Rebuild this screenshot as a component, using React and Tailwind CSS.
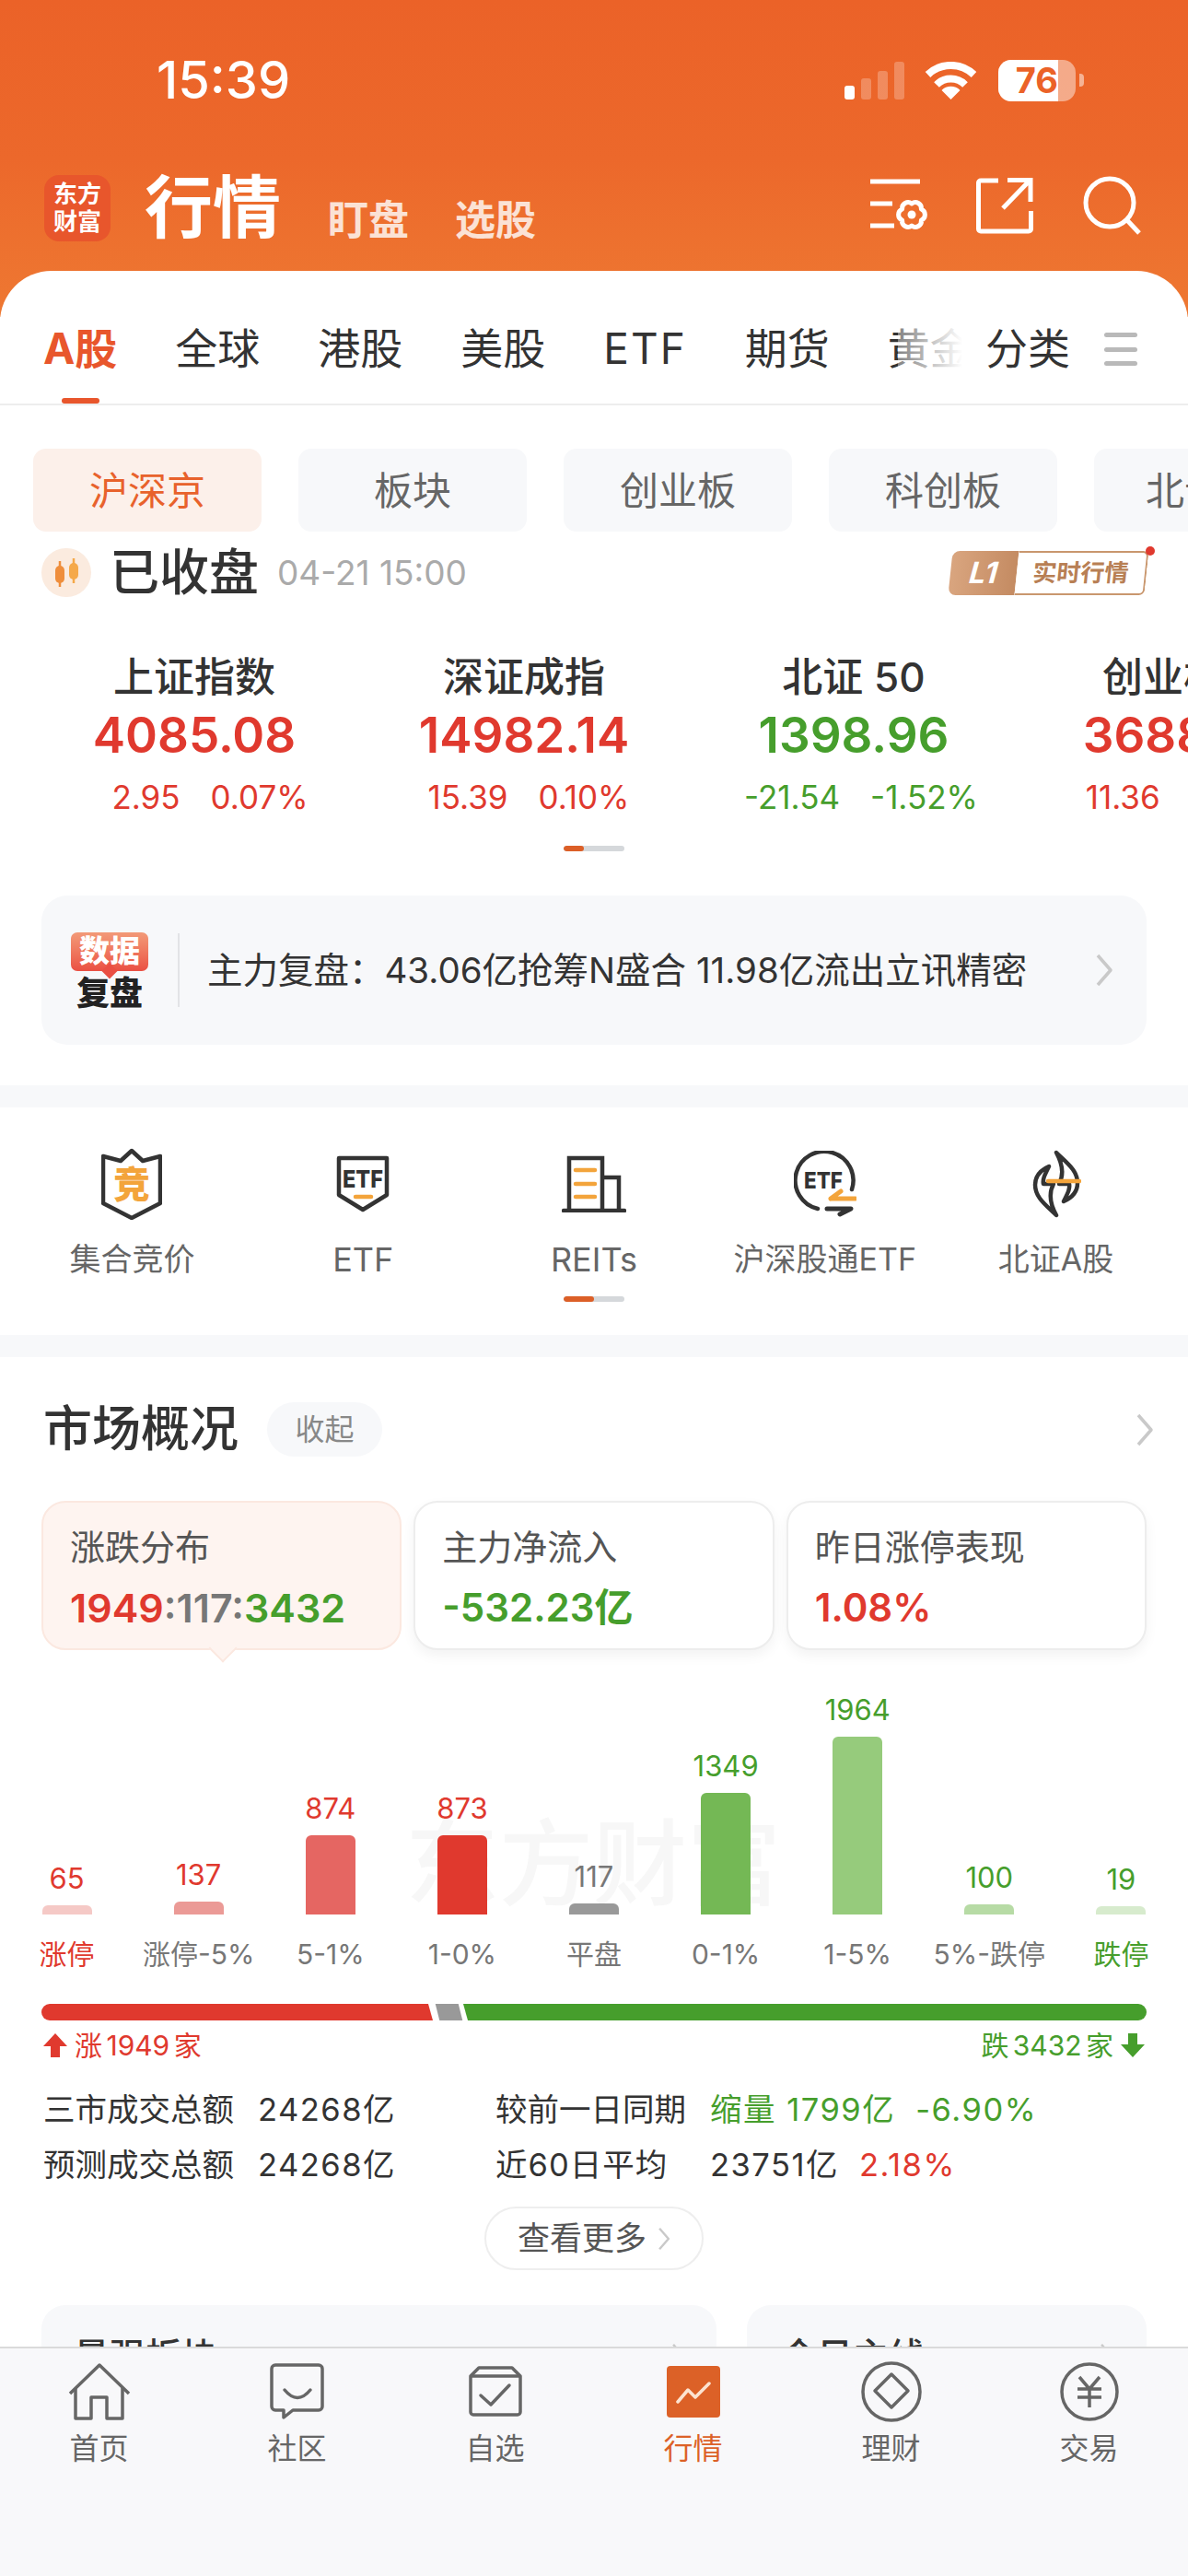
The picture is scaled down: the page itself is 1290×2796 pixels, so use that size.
const bars = [
  { value: "65", label: "涨停", h: "h-[10px]", bar: "bg-[#F5C9C6]", text: "text-[#E0392E]", labelText: "text-[#E0392E]" },
  { value: "137", label: "涨停-5%", h: "h-[14px]", bar: "bg-[#EB9A96]", text: "text-[#E0392E]", labelText: "text-[#777]" },
  { value: "874", label: "5-1%", h: "h-[86px]", bar: "bg-[#E56662]", text: "text-[#E0392E]", labelText: "text-[#777]" },
  { value: "873", label: "1-0%", h: "h-[86px]", bar: "bg-[#E0392E]", text: "text-[#E0392E]", labelText: "text-[#777]" },
  { value: "117", label: "平盘", h: "h-[12px]", bar: "bg-[#999]", text: "text-[#777]", labelText: "text-[#777]" },
  { value: "1349", label: "0-1%", h: "h-[132px]", bar: "bg-[#74B855]", text: "text-[#469E2C]", labelText: "text-[#777]" },
  { value: "1964", label: "1-5%", h: "h-[193px]", bar: "bg-[#96CB7C]", text: "text-[#469E2C]", labelText: "text-[#777]" },
  { value: "100", label: "5%-跌停", h: "h-[11px]", bar: "bg-[#B7DBA5]", text: "text-[#469E2C]", labelText: "text-[#777]" },
  { value: "19", label: "跌停", h: "h-[9px]", bar: "bg-[#D7EBCD]", text: "text-[#469E2C]", labelText: "text-[#469E2C]" },
];

const indices = [
  { name: "上证指数", value: "4085.08", a: "2.95", b: "0.07%", color: "text-[#E0392E]", shift: "ml-[34px]" },
  { name: "深证成指", value: "14982.14", a: "15.39", b: "0.10%", color: "text-[#E0392E]", shift: "ml-[10px]" },
  { name: "北证 50", value: "1398.96", a: "-21.54", b: "-1.52%", color: "text-[#469E2C]", shift: "ml-[16px]" },
  { name: "创业板指", value: "3688.30", a: "11.36", b: "0.31%", color: "text-[#E0392E]", shift: "ml-[2px]" },
];

function Chevron({ className }) {
  return (
    <svg viewBox="0 0 20 36" className={className} fill="none" stroke="#C9C9C9" strokeWidth="3.5">
      <path d="M3 2L17 18L3 34" strokeLinejoin="round" />
    </svg>
  );
}

function StatusBar() {
  return (
    <div className="mt-[63px] h-[48px] flex items-center pl-[170px] pr-[113px]">
      <span className="text-[56px] leading-[48px] font-medium text-white">15:39</span>
      <div className="ml-auto flex items-center">
        <div className="flex items-end gap-[7px] h-[41px]">
          <div className="w-[11px] h-[15px] rounded-[3px] bg-white" />
          <div className="w-[11px] h-[23px] rounded-[3px] bg-white/25" />
          <div className="w-[11px] h-[31px] rounded-[3px] bg-white/25" />
          <div className="w-[11px] h-[41px] rounded-[3px] bg-white/25" />
        </div>
        <svg viewBox="0 0 57 41" className="w-[57px] h-[41px] ml-[22px]" fill="none">
          <path d="M3.5 14A36 36 0 0 1 53.5 14" stroke="#fff" strokeWidth="8" />
          <path d="M13 25A22 22 0 0 1 44 25" stroke="#fff" strokeWidth="8" />
          <path d="M28.5 41L18.5 31A14 14 0 0 1 38.5 31Z" fill="#fff" />
        </svg>
        <div className="ml-[23px] w-[84px] h-[45px] rounded-[14px] bg-white/45 overflow-hidden">
          <div className="w-[65px] h-full bg-white flex items-center justify-end">
            <span className="text-[38px] leading-none font-bold text-[#EB6228]">76</span>
          </div>
        </div>
        <div className="ml-[4px] w-[5px] h-[14px] rounded-r-[4px] bg-white/50" />
      </div>
    </div>
  );
}

function TitleBar() {
  return (
    <div className="mt-[77px] h-[74px] flex items-end pl-[48px]">
      <div className="w-[72px] h-[72px] rounded-[16px] bg-[#E8562C] flex flex-col items-center justify-center text-white text-[26px] leading-[30px] font-bold">
        <span>东方</span>
        <span>财富</span>
      </div>
      <span className="ml-[37px] text-[74px] leading-[74px] font-bold text-white">行情</span>
      <span className="ml-[51px] text-[44px] leading-[46px] font-bold text-white/80">盯盘</span>
      <span className="ml-[50px] text-[44px] leading-[46px] font-bold text-white/80">选股</span>
      <svg viewBox="0 0 63 60" className="ml-auto w-[63px] h-[60px] mb-[9px]" fill="none" stroke="#fff" strokeWidth="5">
        <path d="M0 4H54M0 28H24M0 52H26" />
        <path d="M55.4 34A6.5 6.5 0 0 1 55.4 46A6.5 6.5 0 0 1 45 52A6.5 6.5 0 0 1 34.6 46A6.5 6.5 0 0 1 34.6 34A6.5 6.5 0 0 1 45 28A6.5 6.5 0 0 1 55.4 34Z" strokeLinejoin="round" />
        <circle cx="45" cy="40" r="4.5" fill="#fff" stroke="none" />
      </svg>
      <svg viewBox="0 0 62 62" className="ml-[52px] w-[62px] h-[62px] mb-[8px]" fill="none" stroke="#fff" strokeWidth="5">
        <path d="M24 4H5a2.5 2.5 0 0 0-2.5 2.5V56.5A2.5 2.5 0 0 0 5 59H57a2.5 2.5 0 0 0 2.5-2.5V37" />
        <path d="M29 34L59 3M34 3.5H59V27" />
      </svg>
      <svg viewBox="0 0 64 64" className="ml-[54px] mr-[50px] w-[64px] h-[64px] mb-[7px]" fill="none" stroke="#fff" strokeWidth="5">
        <circle cx="29" cy="29" r="26" />
        <path d="M47 47L61 62" />
      </svg>
    </div>
  );
}

function Tabs() {
  return (
    <div className="h-[146px] border-b-2 border-[#EDEDED] flex pt-[58px] text-[46px] leading-[52px] text-[#333]">
      <div className="relative w-[1045px] overflow-hidden h-[88px] -mb-[2px] shrink-0">
        <div className="flex gap-[63px] pl-[47px] whitespace-nowrap">
          <div className="relative h-[86px] font-bold text-[#E8562C]">
            A股
            <div className="absolute left-[20px] bottom-0 w-[41px] h-[6px] rounded-full bg-[#E8562C]" />
          </div>
          <span>全球</span>
          <span>港股</span>
          <span>美股</span>
          <span className="tracking-[2px]">ETF</span>
          <span>期货</span>
          <span>黄金</span>
        </div>
        <div className="absolute right-0 top-0 w-[70px] h-[60px] bg-gradient-to-r from-white/40 to-white" />
      </div>
      <span className="ml-[25px]">分类</span>
      <div className="ml-[37px] mt-[9px] w-[36px] h-[36px] flex flex-col justify-between">
        <div className="h-[5px] rounded-full bg-[#B9B9B9]" />
        <div className="h-[5px] rounded-full bg-[#B9B9B9]" />
        <div className="h-[5px] rounded-full bg-[#B9B9B9]" />
      </div>
    </div>
  );
}

function SubTabs() {
  const items = ["板块", "创业板", "科创板", "北证50"];
  return (
    <div className="mt-[47px] flex gap-[40px] pl-[36px] overflow-hidden">
      <div className="w-[248px] h-[90px] shrink-0 rounded-[14px] bg-[#FCF0EA] flex items-center justify-center text-[42px] text-[#E8622C]">
        沪深京
      </div>
      {items.map((t) => (
        <div key={t} className="w-[248px] h-[90px] shrink-0 rounded-[14px] bg-[#F7F8FA] flex items-center justify-center text-[42px] text-[#666]">
          {t}
        </div>
      ))}
    </div>
  );
}

function MarketState() {
  return (
    <div className="mt-[18px] h-[53px] flex items-center pl-[45px] pr-[45px]">
      <div className="w-[54px] h-[53px] rounded-full bg-[#FBEBDF] flex items-center justify-center">
        <svg viewBox="0 0 32 34" className="w-[32px] h-[34px]" fill="none">
          <path d="M9 4V32" stroke="#EF8E3C" strokeWidth="2.5" />
          <rect x="4" y="9" width="10" height="19" rx="5" fill="#EF8E3C" />
          <path d="M24 1V28" stroke="#F5A94A" strokeWidth="2.5" />
          <rect x="19" y="6" width="10" height="18" rx="5" fill="#F5A94A" />
        </svg>
      </div>
      <span className="ml-[20px] text-[54px] leading-[53px] font-medium text-[#333]">已收盘</span>
      <span className="ml-[20px] text-[37px] leading-[53px] text-[#AAA]">04-21 15:00</span>
      <div className="relative ml-auto w-[213px] h-[48px] flex">
        <div className="w-[72px] h-full bg-gradient-to-r from-[#D9A57F] to-[#C48B62] rounded-l-[8px] -skew-x-6 flex items-center justify-center">
          <span className="text-[32px] font-bold italic text-white leading-none">L1</span>
        </div>
        <div className="flex-1 h-full bg-white border-2 border-l-0 border-[#C9976E] rounded-r-[6px] -skew-x-6 flex items-center justify-center">
          <span className="text-[26px] font-bold text-[#B87F54] leading-none">实时行情</span>
        </div>
        <div className="absolute -right-[9px] -top-[5px] w-[10px] h-[10px] rounded-full bg-[#E0392E]" />
      </div>
    </div>
  );
}

function IndexRow() {
  return (
    <div className="mt-[61px] flex pl-[32px] overflow-hidden">
      {indices.map((it) => (
        <div key={it.name} className="w-[358px] shrink-0 flex flex-col items-center">
          <span className="text-[44px] leading-[52px] font-medium text-[#333]">{it.name}</span>
          <span className={`mt-[5px] text-[53px] leading-[64px] font-semibold ${it.color}`}>{it.value}</span>
          <div className={`mt-[15px] flex gap-[33px] text-[35px] leading-[40px] ${it.color} ${it.shift}`}>
            <span>{it.a}</span>
            <span>{it.b}</span>
          </div>
        </div>
      ))}
    </div>
  );
}

function ScrollDots({ className, fill }) {
  return (
    <div className={`mx-auto w-[66px] h-[6px] rounded-full bg-[#D5D8DB] overflow-hidden ${className}`}>
      <div className={`h-full rounded-full bg-[#DC5F27] ${fill}`} />
    </div>
  );
}

function ReviewCard() {
  return (
    <div className="mt-[48px] mx-[45px] h-[162px] rounded-[28px] bg-[#F7F8FA] flex items-center pl-[30px] pr-[36px]">
      <div className="w-[88px] flex flex-col items-center">
        <div className="relative w-[84px] h-[42px] rounded-[7px] bg-gradient-to-b from-[#F29A78] to-[#EA4F43] flex items-center justify-center">
          <span className="text-[33px] leading-none font-black text-white">数据</span>
          <div className="absolute left-[36px] -bottom-[6px] w-[12px] h-[12px] rotate-45 bg-[#EA4F43]" />
        </div>
        <span className="mt-[7px] text-[36px] leading-[34px] font-black text-[#222]">复盘</span>
      </div>
      <div className="ml-[30px] w-[2px] h-[80px] bg-[#E2E3E6]" />
      <span className="ml-[30px] text-[38.5px] leading-[48px] text-[#333] whitespace-nowrap">主力复盘：43.06亿抢筹N盛合 11.98亿流出立讯精密</span>
      <Chevron className="ml-auto w-[20px] h-[36px]" />
    </div>
  );
}

function Shortcuts() {
  return (
    <div className="grid grid-cols-5 px-[18px] mt-0">
      <div className="flex flex-col items-center">
        <div className="h-[80px] flex items-center">
          <svg viewBox="0 0 66 78" className="w-[66px] h-[78px]" fill="none" stroke="#333" strokeWidth="4.5" strokeLinejoin="round">
            <path d="M33 3L21 14L2 9V60L33 76L64 60V9L45 14Z" />
            <text x="33" y="54" textAnchor="middle" fontSize="40" fontWeight="900" fill="#F3A43B" stroke="none">竞</text>
          </svg>
        </div>
        <span className="mt-[22px] text-[34px] leading-[40px] text-[#666]">集合竞价</span>
      </div>
      <div className="flex flex-col items-center">
        <div className="h-[80px] flex items-center">
          <svg viewBox="0 0 58 62" className="w-[58px] h-[62px]" fill="none" stroke="#333" strokeWidth="4.5" strokeLinejoin="round">
            <path d="M3 3H55V43L29 59L3 43Z" />
            <text x="7" y="35" textLength="44" lengthAdjust="spacingAndGlyphs" fontSize="26" fontWeight="800" fill="#333" stroke="none">ETF</text>
            <path d="M21 45H38" stroke="#F3A43B" strokeLinecap="round" />
          </svg>
        </div>
        <span className="mt-[22px] text-[36px] leading-[40px] text-[#666]">ETF</span>
      </div>
      <div className="flex flex-col items-center">
        <div className="h-[80px] flex items-center">
          <svg viewBox="0 0 70 62" className="w-[70px] h-[62px]" fill="none" stroke="#333" strokeWidth="4.5">
            <path d="M8 60V3H44V60M44 24H62V60" />
            <path d="M2 60H68" strokeLinecap="round" />
            <path d="M15 16H36M15 31H36M15 45H36" stroke="#F3A43B" strokeLinecap="round" />
          </svg>
        </div>
        <span className="mt-[22px] text-[36px] leading-[40px] text-[#666]">REITs</span>
      </div>
      <div className="flex flex-col items-center">
        <div className="h-[80px] flex items-center">
          <svg viewBox="0 0 68 72" className="w-[68px] h-[72px]" fill="none" stroke="#333" strokeWidth="4.5">
            <path d="M26 63A31.5 31.5 0 1 1 63 42" strokeLinecap="round" />
            <text x="11" y="41" textLength="42" lengthAdjust="spacingAndGlyphs" fontSize="25" fontWeight="800" fill="#333" stroke="none">ETF</text>
            <path d="M40 52H67M40 52L51 44" stroke="#F3A43B" strokeWidth="5" strokeLinecap="round" />
            <path d="M36 63H62L50 69" strokeWidth="5" strokeLinecap="round" strokeLinejoin="round" />
          </svg>
        </div>
        <span className="mt-[22px] text-[34px] leading-[40px] text-[#666] whitespace-nowrap">沪深股通ETF</span>
      </div>
      <div className="flex flex-col items-center">
        <div className="h-[80px] flex items-center">
          <svg viewBox="0 0 54 74" className="w-[54px] h-[74px]" fill="none" stroke="#333" strokeWidth="4.5" strokeLinejoin="round" strokeLinecap="round">
            <path d="M27 3C38 14 50 22 50 36C50 46 44 52 35 56C40 46 42 42 41 37H30C36 26 33 14 27 3Z" />
            <path d="M27 71C16 60 4 52 4 38C4 28 10 22 19 18C14 28 12 32 13 37H24C18 48 21 60 27 71Z" />
            <path d="M18 34H52" stroke="#F3A43B" strokeWidth="4.5" />
          </svg>
        </div>
        <span className="mt-[22px] text-[34px] leading-[40px] text-[#666]">北证A股</span>
      </div>
    </div>
  );
}

function MarketCards() {
  return (
    <div className="mt-[48px] mx-[45px] grid grid-cols-3 gap-[13px]">
      <div className="relative h-[162px] rounded-[26px] bg-[#FEF4F0] border-2 border-[#FBE8E0] pl-[29px] pt-[26px]">
        <div className="text-[38px] leading-[44px] text-[#555]">涨跌分布</div>
        <div className="mt-[19px] text-[43px] leading-[50px] font-semibold whitespace-nowrap">
          <span className="text-[#E0392E]">1949</span>
          <span className="text-[#777]">:117:</span>
          <span className="text-[#469E2C]">3432</span>
        </div>
        <div className="absolute left-[184px] -bottom-[11px] w-[22px] h-[22px] rotate-45 bg-[#FEF4F0] border-r-2 border-b-2 border-[#FBE8E0]" />
      </div>
      <div className="h-[162px] rounded-[26px] bg-white border-2 border-[#EDEDED] shadow-[0_6px_14px_rgba(0,0,0,0.05)] pl-[29px] pt-[26px]">
        <div className="text-[38px] leading-[44px] text-[#555]">主力净流入</div>
        <div className="mt-[19px] text-[42px] leading-[50px] font-semibold text-[#469E2C]">-532.23亿</div>
      </div>
      <div className="h-[162px] rounded-[26px] bg-white border-2 border-[#EDEDED] shadow-[0_6px_14px_rgba(0,0,0,0.05)] pl-[29px] pt-[26px]">
        <div className="text-[38px] leading-[44px] text-[#555]">昨日涨停表现</div>
        <div className="mt-[19px] text-[42px] leading-[50px] font-semibold text-[#E0392E]">1.08%</div>
      </div>
    </div>
  );
}

function Chart() {
  return (
    <div className="relative">
      <div className="absolute left-[440px] top-[180px] text-[102px] leading-[104px] font-medium text-[#F7F7F7] whitespace-nowrap">东方财富</div>
      <div className="relative grid grid-cols-9 px-[1px] h-[287px]">
        {bars.map((b) => (
          <div key={b.label} className="flex flex-col items-center justify-end">
            <span className={`text-[31px] leading-[36px] mb-[11px] ${b.text}`}>{b.value}</span>
            <div className={`w-[54px] rounded-t-[6px] ${b.h} ${b.bar}`} />
          </div>
        ))}
      </div>
      <div className="relative grid grid-cols-9 px-[1px] mt-[23px]">
        {bars.map((b) => (
          <span key={b.label} className={`text-center text-[30px] leading-[40px] whitespace-nowrap ${b.labelText}`}>{b.label}</span>
        ))}
      </div>
    </div>
  );
}

function Breadth() {
  return (
    <div>
      <div className="mt-[34px] mx-[45px] h-[18px] rounded-full overflow-hidden flex">
        <div className="w-[425px] bg-[#E0392E] [clip-path:polygon(0_0,420px_0,100%_100%,0_100%)]" />
        <div className="ml-[5px] w-[25px] bg-[#999] skew-x-[14deg]" />
        <div className="ml-[3px] flex-1 bg-[#469E2C] [clip-path:polygon(0_0,100%_0,100%_100%,5px_100%)]" />
      </div>
      <div className="mt-[9px] mx-[47px] h-[36px] flex items-center text-[30px] leading-[36px] [word-spacing:-4px]">
        <svg viewBox="0 0 26 26" className="w-[26px] h-[26px]" fill="#E0392E">
          <path d="M13 0L26 14H18V26H8V14H0Z" />
        </svg>
        <span className="ml-[8px] text-[#E0392E]">涨 1949 家</span>
        <span className="ml-auto text-[#469E2C]">跌 3432 家</span>
        <svg viewBox="0 0 26 26" className="ml-[8px] w-[26px] h-[26px]" fill="#469E2C">
          <path d="M13 26L26 12H18V0H8V12H0Z" />
        </svg>
      </div>
    </div>
  );
}

function TurnoverStats() {
  return (
    <div className="mt-[22px] pl-[47px] grid grid-cols-[233px_258px_233px_1fr] text-[34.5px] leading-[60px] text-[#333] whitespace-nowrap">
      <span>三市成交总额</span>
      <span className="tracking-[1.5px]">24268亿</span>
      <span>较前一日同期</span>
      <div className="flex gap-[22px] text-[#469E2C] tracking-[1.5px]">
        <span>缩量 1799亿</span>
        <span>-6.90%</span>
      </div>
      <span>预测成交总额</span>
      <span className="tracking-[1.5px]">24268亿</span>
      <span className="tracking-[1px]">近60日平均</span>
      <div className="flex gap-[22px] tracking-[1.5px]">
        <span>23751亿</span>
        <span className="text-[#E0392E]">2.18%</span>
      </div>
    </div>
  );
}

function NavIcon({ active, label, children }) {
  return (
    <div className="flex flex-col items-center">
      <div className="h-[66px] flex items-center justify-center">{children}</div>
      <span className={`mt-[9px] text-[32px] leading-[40px] ${active ? "text-[#DC6127]" : "text-[#666]"}`}>{label}</span>
    </div>
  );
}

function BottomNav() {
  return (
    <div className="absolute left-0 right-0 top-[2547px] bottom-0 bg-[#F8F8FA] border-t-2 border-[#DADADA] grid grid-cols-6 pt-[14px] content-start">
      <NavIcon label="首页">
        <svg viewBox="0 0 68 62" className="w-[68px] h-[62px]" fill="none" stroke="#666" strokeWidth="3.5" strokeLinejoin="round">
          <path d="M2 33L34 2L66 33" />
          <path d="M8 27V60H25V37H42V60H59V27" />
        </svg>
      </NavIcon>
      <NavIcon label="社区">
        <svg viewBox="0 0 59 62" className="w-[59px] h-[62px]" fill="none" stroke="#666" strokeWidth="3.5" strokeLinejoin="round">
          <path d="M6 2H53a4 4 0 0 1 4 4V47a4 4 0 0 1-4 4H25L15 59V51H6a4 4 0 0 1-4-4V6a4 4 0 0 1 4-4Z" />
          <path d="M16 29Q30 46 44 29" strokeLinecap="round" />
        </svg>
      </NavIcon>
      <NavIcon label="自选">
        <svg viewBox="0 0 58 56" className="w-[58px] h-[56px]" fill="none" stroke="#666" strokeWidth="3.5" strokeLinejoin="round">
          <path d="M2 11V50a3 3 0 0 0 3 3H53a3 3 0 0 0 3-3V11L47 2H11Z" />
          <path d="M2 11H56" />
          <path d="M13 32L24 42L44 21" strokeLinecap="round" />
        </svg>
      </NavIcon>
      <NavIcon active label="行情">
        <svg viewBox="0 0 58 56" className="w-[58px] h-[56px]" fill="none">
          <rect width="58" height="56" rx="4" fill="#DC6127" />
          <path d="M12 39L23 26L31 34L46 19" stroke="#FCE3D0" strokeWidth="3.5" strokeLinecap="round" strokeLinejoin="round" />
        </svg>
      </NavIcon>
      <NavIcon label="理财">
        <svg viewBox="0 0 66 66" className="w-[66px] h-[66px]" fill="none" stroke="#666" strokeWidth="3.5" strokeLinejoin="round">
          <circle cx="33" cy="33" r="31" />
          <path d="M33 14L51 32L33 50L15 32Z" />
        </svg>
      </NavIcon>
      <NavIcon label="交易">
        <svg viewBox="0 0 64 64" className="w-[64px] h-[64px]" fill="none" stroke="#666" strokeWidth="3.5">
          <circle cx="32" cy="32" r="30" />
          <path d="M21 16L32 29L43 16M19 29H45M19 38H45M32 29V49" />
        </svg>
      </NavIcon>
    </div>
  );
}

export default function App() {
  return (
    <div className="relative w-[1290px] h-[2796px] overflow-hidden bg-white [font-family:Inter,'Noto_Sans_CJK_SC',sans-serif]">
      {/* orange header */}
      <div className="h-[344px] bg-gradient-to-b from-[#EB6228] via-[#EC682B] to-[#EE7832] flex flex-col">
        <StatusBar />
        <TitleBar />
      </div>

      <div className="relative -mt-[50px] rounded-t-[56px] bg-white">
        <Tabs />
        <SubTabs />
        <MarketState />
        <IndexRow />
        <ScrollDots className="mt-[33px]" fill="w-[22px]" />
        <ReviewCard />
        <div className="mt-[44px] h-[24px] bg-[#F7F8FA] mb-[43px]" />
        <Shortcuts />
        <ScrollDots className="mt-[20px]" fill="w-[33px]" />
        <div className="mt-[36px] h-[24px] bg-[#F7F8FA]" />

        {/* market overview */}
        <div className="mt-[49px] h-[59px] flex items-center pl-[47px] pr-[37px]">
          <span className="text-[53px] leading-[59px] font-medium text-[#333]">市场概况</span>
          <div className="ml-[31px] w-[125px] h-[59px] rounded-full bg-[#F7F8FA] flex items-center justify-center text-[32px] text-[#888]">收起</div>
          <Chevron className="ml-auto w-[20px] h-[36px]" />
        </div>
        <MarketCards />
        <Chart />
        <Breadth />
        <TurnoverStats />
        <div className="mt-[15px] mx-auto w-[238px] h-[69px] rounded-full border-2 border-[#EEE] flex items-center justify-center gap-[12px] text-[35px] text-[#555]">
          查看更多
          <Chevron className="w-[14px] h-[28px]" />
        </div>
        <div className="mt-[38px] mx-[45px] flex gap-[33px]">
          <div className="w-[733px] h-[140px] rounded-[26px] bg-[#F7F8FA] pt-[32px] px-[35px] flex justify-between items-start">
            <span className="text-[39px] leading-[46px] font-medium text-[#333]">最强板块</span>
            <Chevron className="w-[14px] h-[28px] mt-[8px]" />
          </div>
          <div className="flex-1 h-[140px] rounded-[26px] bg-[#F7F8FA] pt-[32px] px-[37px] flex justify-between items-start">
            <span className="text-[39px] leading-[46px] font-medium text-[#333]">今日主线</span>
            <Chevron className="w-[14px] h-[28px] mt-[8px]" />
          </div>
        </div>
      </div>

      <BottomNav />
    </div>
  );
}
